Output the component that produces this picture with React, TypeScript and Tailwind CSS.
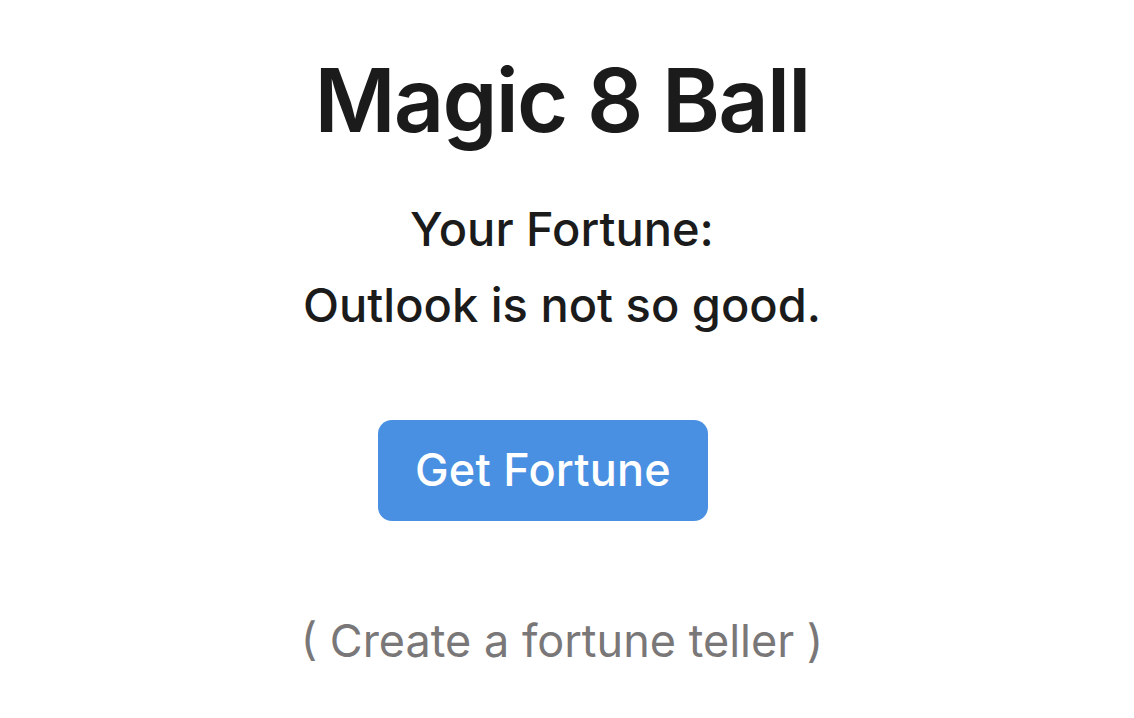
import React from "react";

export default function App() {
  return (
    <div className="min-h-screen bg-white flex flex-col items-center pr-[10px] text-[#1b1b1b]" style={{ fontFamily: "Inter, 'Noto Sans', sans-serif" }}>
      <h1 className="mt-[48px] text-[88px] leading-[1.2] font-semibold tracking-[-0.02em]">Magic 8 Ball</h1>
      <div className="mt-[37px] text-[47px] leading-[76px] font-medium text-center">
        <div>Your Fortune:</div>
        <div>Outlook is not so good.</div>
      </div>
      <button className="mt-[77px] mr-[38px] w-[330px] h-[101px] rounded-[14px] bg-[#4a90e2] text-white text-[45px] tracking-[0.005em] font-medium">
        Get Fortune
      </button>
      <div className="mt-[86px] text-[45px] leading-[1.5] text-[#7a7778]">( Create a fortune teller )</div>
    </div>
  );
}
